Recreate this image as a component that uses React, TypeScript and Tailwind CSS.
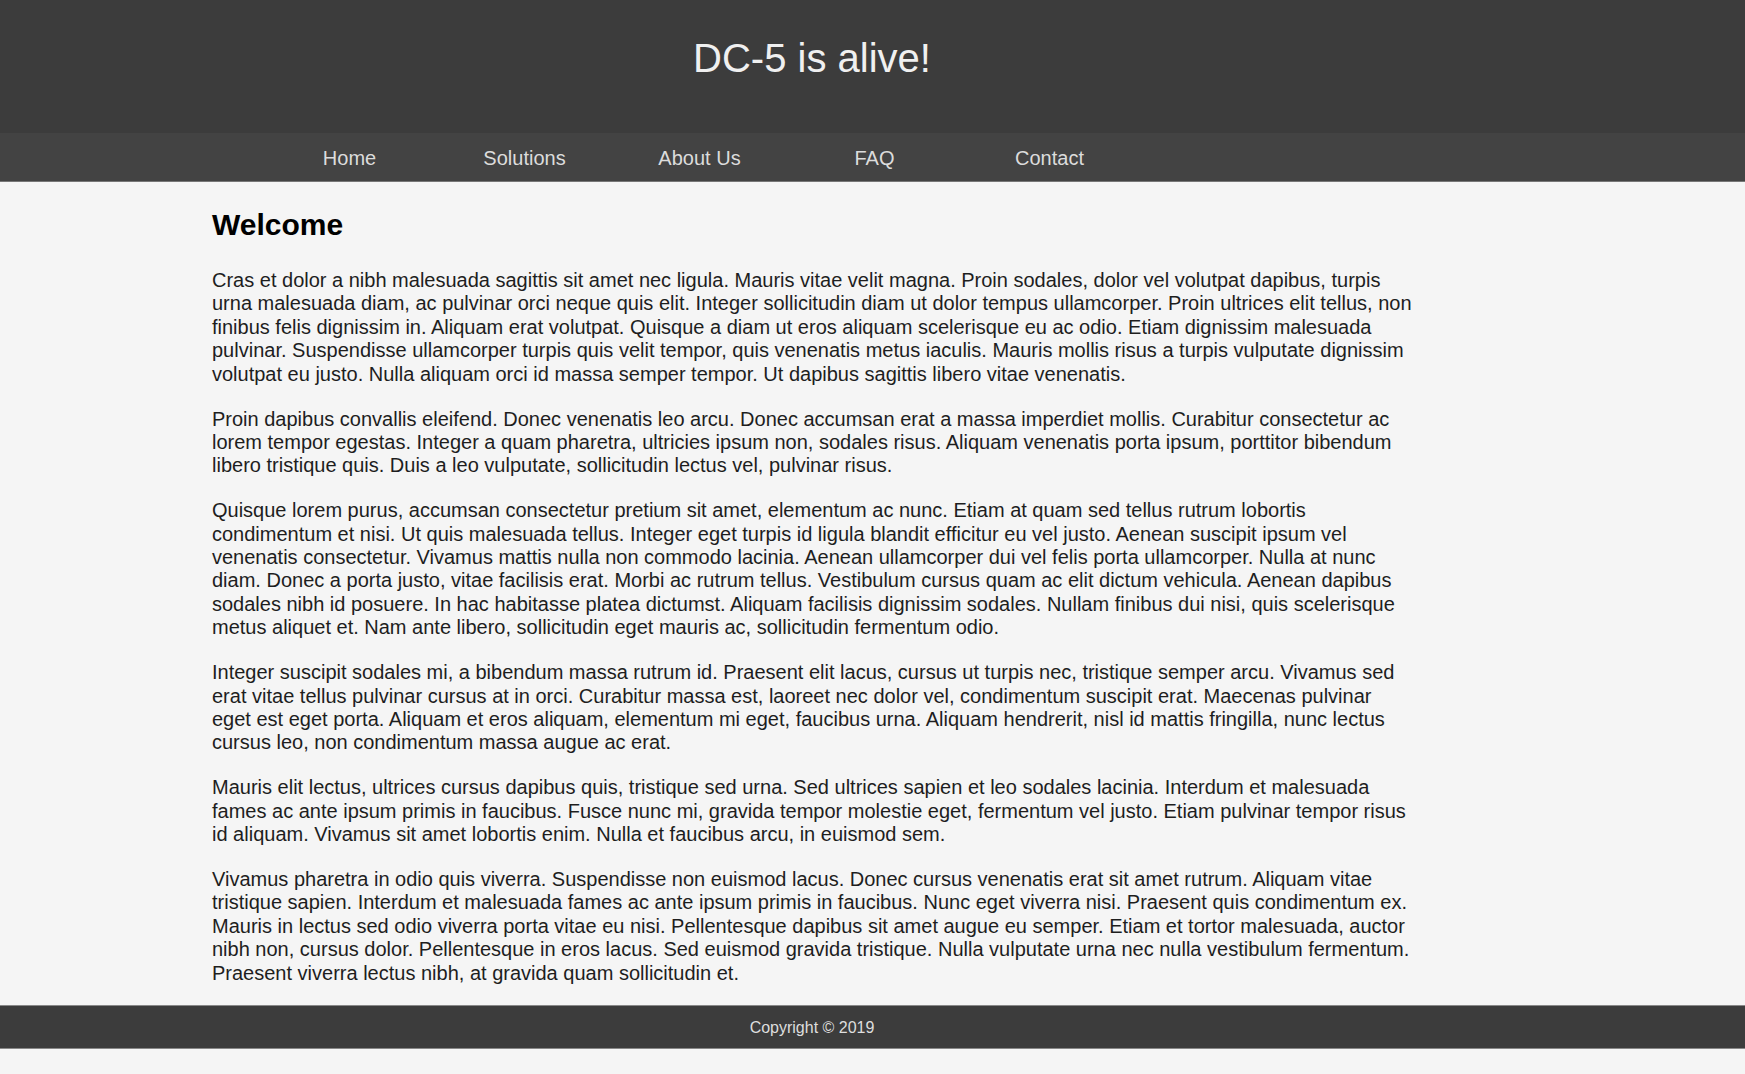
import React from 'react';

const paragraphs = [
  'Cras et dolor a nibh malesuada sagittis sit amet nec ligula. Mauris vitae velit magna. Proin sodales, dolor vel volutpat dapibus, turpis urna malesuada diam, ac pulvinar orci neque quis elit. Integer sollicitudin diam ut dolor tempus ullamcorper. Proin ultrices elit tellus, non finibus felis dignissim in. Aliquam erat volutpat. Quisque a diam ut eros aliquam scelerisque eu ac odio. Etiam dignissim malesuada pulvinar. Suspendisse ullamcorper turpis quis velit tempor, quis venenatis metus iaculis. Mauris mollis risus a turpis vulputate dignissim volutpat eu justo. Nulla aliquam orci id massa semper tempor. Ut dapibus sagittis libero vitae venenatis.',
  'Proin dapibus convallis eleifend. Donec venenatis leo arcu. Donec accumsan erat a massa imperdiet mollis. Curabitur consectetur ac lorem tempor egestas. Integer a quam pharetra, ultricies ipsum non, sodales risus. Aliquam venenatis porta ipsum, porttitor bibendum libero tristique quis. Duis a leo vulputate, sollicitudin lectus vel, pulvinar risus.',
  'Quisque lorem purus, accumsan consectetur pretium sit amet, elementum ac nunc. Etiam at quam sed tellus rutrum lobortis condimentum et nisi. Ut quis malesuada tellus. Integer eget turpis id ligula blandit efficitur eu vel justo. Aenean suscipit ipsum vel venenatis consectetur. Vivamus mattis nulla non commodo lacinia. Aenean ullamcorper dui vel felis porta ullamcorper. Nulla at nunc diam. Donec a porta justo, vitae facilisis erat. Morbi ac rutrum tellus. Vestibulum cursus quam ac elit dictum vehicula. Aenean dapibus sodales nibh id posuere. In hac habitasse platea dictumst. Aliquam facilisis dignissim sodales. Nullam finibus dui nisi, quis scelerisque metus aliquet et. Nam ante libero, sollicitudin eget mauris ac, sollicitudin fermentum odio.',
  'Integer suscipit sodales mi, a bibendum massa rutrum id. Praesent elit lacus, cursus ut turpis nec, tristique semper arcu. Vivamus sed erat vitae tellus pulvinar cursus at in orci. Curabitur massa est, laoreet nec dolor vel, condimentum suscipit erat. Maecenas pulvinar eget est eget porta. Aliquam et eros aliquam, elementum mi eget, faucibus urna. Aliquam hendrerit, nisl id mattis fringilla, nunc lectus cursus leo, non condimentum massa augue ac erat.',
  'Mauris elit lectus, ultrices cursus dapibus quis, tristique sed urna. Sed ultrices sapien et leo sodales lacinia. Interdum et malesuada fames ac ante ipsum primis in faucibus. Fusce nunc mi, gravida tempor molestie eget, fermentum vel justo. Etiam pulvinar tempor risus id aliquam. Vivamus sit amet lobortis enim. Nulla et faucibus arcu, in euismod sem.',
  'Vivamus pharetra in odio quis viverra. Suspendisse non euismod lacus. Donec cursus venenatis erat sit amet rutrum. Aliquam vitae tristique sapien. Interdum et malesuada fames ac ante ipsum primis in faucibus. Nunc eget viverra nisi. Praesent quis condimentum ex. Mauris in lectus sed odio viverra porta vitae eu nisi. Pellentesque dapibus sit amet augue eu semper. Etiam et tortor malesuada, auctor nibh non, cursus dolor. Pellentesque in eros lacus. Sed euismod gravida tristique. Nulla vulputate urna nec nulla vestibulum fermentum. Praesent viverra lectus nibh, at gravida quam sollicitudin et.',
];

const links = ['Home', 'Solutions', 'About Us', 'FAQ', 'Contact'];

export default function App() {
  return (
    <div className="min-h-screen bg-[#f5f5f5] font-['Liberation_Sans',Arial,sans-serif]">
      {/* header */}
      <div className="h-[133px] bg-[#3c3c3c] pt-[35px]">
        <div className="ml-[212px] w-[1200px] text-center text-[40px] leading-[46px] text-[#f0f0f0]">
          DC-5 is alive!
        </div>
      </div>

      {/* menu */}
      <div className="flex h-[49px] border-b border-[#777] bg-[#434343]">
        <div className="ml-[262px] flex">
          {links.map((l) => (
            <a key={l} href="#" className="w-[175px] pt-[14px] text-center text-[20px] leading-[23px] text-[#dcdcdc]">
              {l}
            </a>
          ))}
        </div>
      </div>

      {/* content */}
      <div className="ml-[212px] w-[1200px] pb-[20px] pt-[26px] text-[#1e1e1e]">
        <h2 className="mb-[27px] text-[30px] font-bold leading-[34px] text-black">Welcome</h2>
        <div className="flex flex-col gap-[21.5px]">
          {paragraphs.map((p, i) => (
            <p key={i} className="text-[20px] leading-[23.4px]">
              {p}
            </p>
          ))}
        </div>
      </div>

      {/* footer */}
      <div className="border-y border-[#888] bg-[#3c3c3c] pb-[11px] pt-[13px]">
        <div className="ml-[212px] w-[1200px] text-center text-[16px] leading-[18px] text-[#dedede]">
          Copyright © 2019
        </div>
      </div>
    </div>
  );
}
